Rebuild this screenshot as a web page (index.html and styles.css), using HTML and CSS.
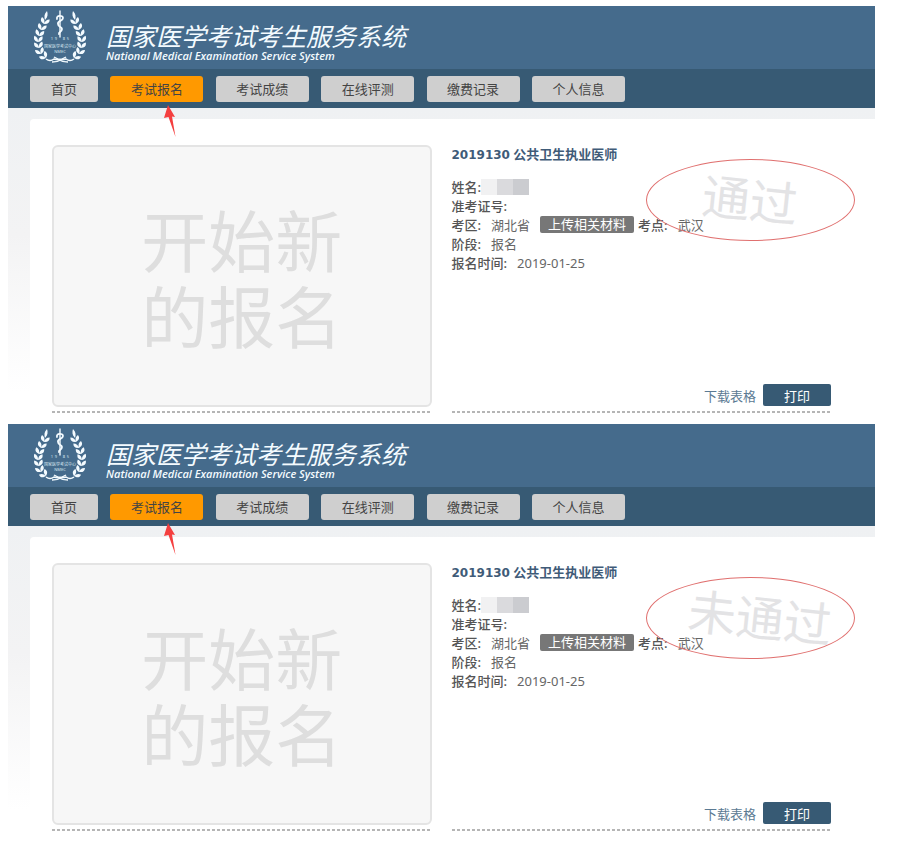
FILE: index.html
```html
<!DOCTYPE html>
<html lang="zh-CN">
<head>
  <meta charset="UTF-8" />
  <meta name="viewport" content="width=device-width, initial-scale=1.0"/>
  <title>国家医学考试考生服务系统</title>
  <link rel="stylesheet" href="styles.css">
</head>
<body>
  <section class="panel">
    <header class="header">
      <svg class="logo" viewBox="0 0 52 54" aria-hidden="true">
        <g id="logo">
          <g id="branch" fill="#f4fbff">
            <path d="M13 1C10 4 10 7 11 10C14 7 14 4 13 1Z"/>
            <path d="M0 0C-4-1-5-3-4-6C-1-5 0-3 0 0ZM0 0C0-3 1-5 4-6C5-3 4-1 0 0Z" transform="translate(10 14) rotate(18)"/>
            <path d="M0 0C-4-1-5-3-4-6C-1-5 0-3 0 0ZM0 0C0-3 1-5 4-6C5-3 4-1 0 0Z" transform="translate(7 20) rotate(18)"/>
            <path d="M0 0C-4-1-5-3-4-6C-1-5 0-3 0 0ZM0 0C0-3 1-5 4-6C5-3 4-1 0 0Z" transform="translate(5 26) rotate(12)"/>
            <path d="M0 0C-4-1-5-3-4-6C-1-5 0-3 0 0ZM0 0C0-3 1-5 4-6C5-3 4-1 0 0Z" transform="translate(4 32) rotate(4)"/>
            <path d="M0 0C-4-1-5-3-4-6C-1-5 0-3 0 0ZM0 0C0-3 1-5 4-6C5-3 4-1 0 0Z" transform="translate(5 38) rotate(-8)"/>
            <path d="M0 0C-4-1-5-3-4-6C-1-5 0-3 0 0ZM0 0C0-3 1-5 4-6C5-3 4-1 0 0Z" transform="translate(7 44) rotate(-22)"/>
            <path d="M0 0C-4-1-5-3-4-6C-1-5 0-3 0 0ZM0 0C0-3 1-5 4-6C5-3 4-1 0 0Z" transform="translate(12 48) rotate(-46)"/>
            <path d="M12 49Q16 52 20 49Q26 51 32 47" fill="none" stroke="#f4fbff" stroke-width="1.500"/>
            <path d="M18 52Q24 52 29 49" fill="none" stroke="#f4fbff" stroke-width="1.300"/>
          </g>
          <use href="#branch" transform="translate(52 0) scale(-1 1)"/>
          <g fill="none" stroke="#f4fbff" stroke-linecap="round">
            <path d="M26 1V27" stroke-width="1.400"/>
            <path d="M23 9C22 5 29 5 29 8C29 11 23 11 24 14C24 17 28 17 28 19C28 22 24 22 25 24" stroke-width="1.800"/>
          </g>
          <g class="logo-text">
            <text x="18" y="30">1</text>
            <text x="22" y="30">9</text>
            <text x="30" y="30">8</text>
            <text x="34" y="30">5</text>
            <text x="26" y="38">国家医学考试中心</text>
            <text x="26" y="43">NMEC</text>
          </g>
        </g>
      </svg>
      <div>
        <h1>国家医学考试考生服务系统</h1>
        <p class="subtitle">National Medical Examination Service System</p>
      </div>
    </header>
    <nav class="nav">
      <ul>
        <li><a class="home" href="#">首页</a></li>
        <li class="current">
          <a class="active" href="#">考试报名</a>
          <svg class="arrow" viewBox="0 0 16 32" aria-hidden="true"><path d="M5 0L12 12L9 11.500L12.500 32L5.500 12L1 13Z"/></svg>
        </li>
        <li><a href="#">考试成绩</a></li>
        <li><a href="#">在线评测</a></li>
        <li><a href="#">缴费记录</a></li>
        <li><a href="#">个人信息</a></li>
      </ul>
    </nav>
    <div class="content">
      <div class="cards">
        <div class="cell">
          <button class="start" type="button">开始新<br>的报名</button>
        </div>
        <div class="cell record">
          <h2><span class="code">2019130</span> 公共卫生执业医师</h2>
          <div class="row"><b>姓名:</b><span class="masked"></span></div>
          <div class="row"><b>准考证号:</b></div>
          <div class="row">
            <b>考区:</b><span class="value">湖北省</span>
            <button class="upload" type="button">上传相关材料</button>
            <b>考点:</b><span class="value">武汉</span>
          </div>
          <div class="row"><b>阶段:</b><span class="value">报名</span></div>
          <div class="row"><b>报名时间:</b><span class="value">2019-01-25</span></div>
          <div class="stamp"><span>通过</span></div>
          <div class="actions">
            <a href="#">下载表格</a>
            <button class="print" type="button">打印</button>
          </div>
        </div>
      </div>
    </div>
  </section>

  <section class="panel">
    <header class="header">
      <svg class="logo" viewBox="0 0 52 54" aria-hidden="true"><use href="#logo"/></svg>
      <div>
        <h1>国家医学考试考生服务系统</h1>
        <p class="subtitle">National Medical Examination Service System</p>
      </div>
    </header>
    <nav class="nav">
      <ul>
        <li><a class="home" href="#">首页</a></li>
        <li class="current">
          <a class="active" href="#">考试报名</a>
          <svg class="arrow" viewBox="0 0 16 32" aria-hidden="true"><path d="M5 0L12 12L9 11.500L12.500 32L5.500 12L1 13Z"/></svg>
        </li>
        <li><a href="#">考试成绩</a></li>
        <li><a href="#">在线评测</a></li>
        <li><a href="#">缴费记录</a></li>
        <li><a href="#">个人信息</a></li>
      </ul>
    </nav>
    <div class="content">
      <div class="cards">
        <div class="cell">
          <button class="start" type="button">开始新<br>的报名</button>
        </div>
        <div class="cell record">
          <h2><span class="code">2019130</span> 公共卫生执业医师</h2>
          <div class="row"><b>姓名:</b><span class="masked"></span></div>
          <div class="row"><b>准考证号:</b></div>
          <div class="row">
            <b>考区:</b><span class="value">湖北省</span>
            <button class="upload" type="button">上传相关材料</button>
            <b>考点:</b><span class="value">武汉</span>
          </div>
          <div class="row"><b>阶段:</b><span class="value">报名</span></div>
          <div class="row"><b>报名时间:</b><span class="value">2019-01-25</span></div>
          <div class="stamp failed"><span>未通过</span></div>
          <div class="actions">
            <a href="#">下载表格</a>
            <button class="print" type="button">打印</button>
          </div>
        </div>
      </div>
    </div>
  </section>
</body>
</html>
```
FILE: styles.css
```css
* {
  box-sizing: border-box;
}
body {
  margin: 0;
  padding: 6px 39px 0 8px;
  background: #fff;
  color: #666;
  font-family: "Noto Sans", "Noto Sans CJK SC", sans-serif;
  font-size: 13px;
}
button {
  font-family: inherit;
  cursor: pointer;
}

/* header */
.header {
  display: flex;
  align-items: flex-start;
  gap: 20px;
  height: 63px;
  padding: 4px 26px 0;
  background: #456b8c;
  color: #f4fbff;
}
.logo {
  width: 52px;
  height: 54px;
}
.logo-text {
  fill: #d5e5ef;
  font-size: 4px;
  text-anchor: middle;
}
h1 {
  margin: 12px 0 0;
  font-size: 25px;
  font-weight: 400;
  font-style: italic;
  line-height: 28px;
}
.subtitle {
  margin: 0;
  font-family: "Open Sans", sans-serif;
  font-size: 11px;
  font-weight: 600;
  font-style: italic;
  line-height: 12px;
}

/* navigation */
.nav {
  padding: 7px 22px 6px;
  background: #375a74;
}
.nav ul {
  display: flex;
  justify-content: space-between;
  max-width: 595px;
  margin: 0;
  padding: 0;
  list-style: none;
}
.nav a {
  display: block;
  width: 93px;
  border-radius: 3px;
  background: #cfcfcf;
  color: #444;
  line-height: 26px;
  text-align: center;
  text-decoration: none;
}
.nav a.home {
  width: 68px;
}
.nav a.active {
  background: #ff9900;
}
.current {
  position: relative;
}
.arrow {
  position: absolute;
  top: 29px;
  left: 53px;
  width: 16px;
  height: 32px;
  fill: #f43f3f;
}

/* content */
.content {
  padding: 11px 0 0 22px;
  background: linear-gradient(#eff1f3, #f3f3f4 40%, #fff 90%);
}
.cards {
  display: grid;
  grid-template-columns: 1fr 1fr;
  gap: 20px;
  padding: 26px 44px 11px 22px;
  border-top-left-radius: 4px;
  background: #fff;
}
.cell {
  height: 268px;
  padding-bottom: 5px;
  /* short dashes along the bottom */
  background: repeating-linear-gradient(90deg, #b5b5b5 0 3px, #fff 3px 5px) bottom / 100% 2px no-repeat;
}
.start {
  width: 100%;
  height: 262px;
  padding: 6px 0 0;
  border: 2px solid #e4e4e4;
  border-radius: 6px;
  background: #f7f7f7;
  color: #dedede;
  font-size: 67px;
  line-height: 76px;
}
.record {
  position: relative;
  display: flex;
  flex-direction: column;
}
h2 {
  margin: 0 0 12px;
  color: #3f5b78;
  font-size: 13px;
  line-height: 19px;
}
.code {
  font-family: "DejaVu Sans", sans-serif;
  font-size: 12px;
}
.row {
  display: flex;
  align-items: center;
  height: 19px;
}
.row b {
  color: #555;
  font-weight: 500;
}
.value {
  margin-left: 10px;
}
.masked {
  width: 48px;
  height: 16px;
  background: linear-gradient(90deg, #f1f1f2 16px, #dadadd 16px, #dadadd 32px, #cbccd0 32px);
}
.upload {
  height: 17px;
  margin: 0 4px 0 10px;
  padding: 0 8px;
  border: 0;
  border-radius: 2px;
  background: #777;
  color: #fff;
  font-size: 13px;
  line-height: 17px;
}
.actions {
  display: flex;
  align-items: center;
  justify-content: flex-end;
  gap: 7px;
  margin: auto 0 2px;
}
.actions a {
  color: #5b7a93;
  text-decoration: none;
}
.print {
  width: 68px;
  height: 22px;
  padding: 0;
  border: 0;
  border-radius: 2px;
  background: #375a74;
  color: #fff;
  font-size: 13px;
}

/* result stamp, laid over the record */
.stamp {
  position: absolute;
  top: 14px;
  right: -24px;
  display: flex;
  align-items: center;
  justify-content: center;
  width: 209px;
  height: 82px;
  border: 1px solid #e0706f;
  border-radius: 50%;
  color: #e3e3e5;
  font-size: 48px;
  line-height: 56px;
}
.stamp span {
  transform: rotate(6deg);
}
.failed {
  padding-left: 20px;
}
```
